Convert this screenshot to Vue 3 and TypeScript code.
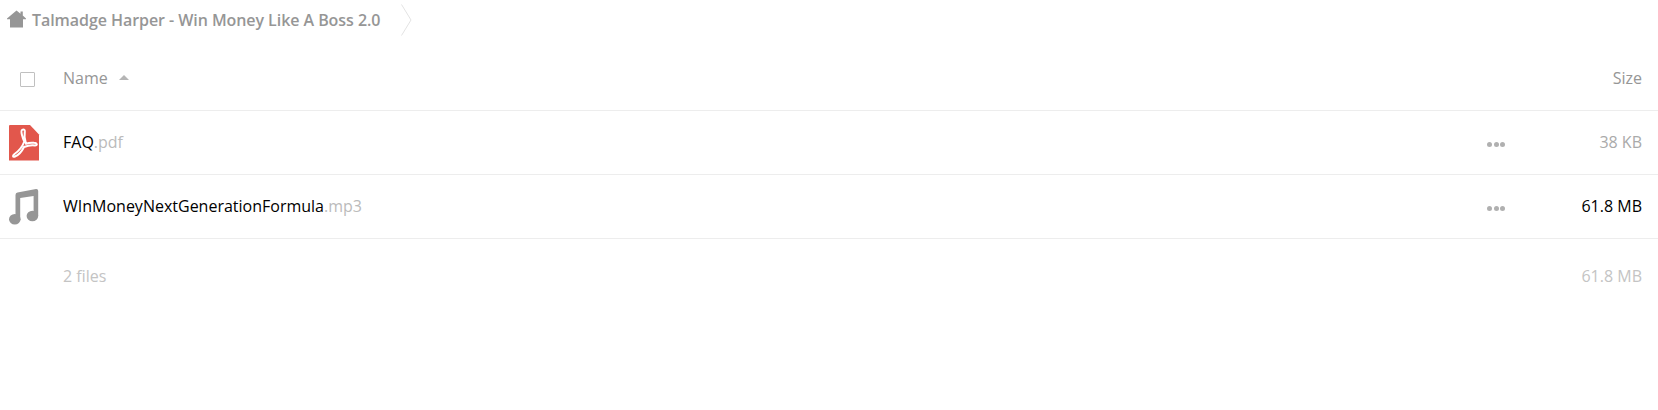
<script setup lang="ts">
interface FileRow { base: string; ext: string; size: string; dark: boolean; kind: 'pdf' | 'audio' }
const files: FileRow[] = [
  { base: 'FAQ', ext: '.pdf', size: '38 KB', dark: false, kind: 'pdf' },
  { base: 'WInMoneyNextGenerationFormula', ext: '.mp3', size: '61.8 MB', dark: true, kind: 'audio' },
]
</script>

<template>
  <div class="page">
    <nav class="crumbs">
      <svg class="home" width="19" height="18" viewBox="0 0 19 18">
        <path d="M9.5 0.5 L13.5 3.8 V1.5 H15.8 V5.6 L19 8.6 V9.2 H16 V17.5 H3 V9.2 H0 V8.6 Z" fill="#969696" />
      </svg>
      <span class="crumb">Talmadge Harper - Win Money Like A Boss 2.0</span>
      <svg class="chev" width="11" height="32" viewBox="0 0 11 32">
        <path d="M0.5 0.5 L10 16 L0.5 31.5" fill="none" stroke="#e3e3e3" />
      </svg>
    </nav>
    <div class="row head">
      <div class="icon-col"><span class="check"></span></div>
      <div class="name-col">Name<span class="sort"></span></div>
      <div class="size-col">Size</div>
    </div>
    <div v-for="f in files" :key="f.base" class="row file">
      <div class="icon-col">
        <svg v-if="f.kind === 'pdf'" class="ficon" width="31" height="36" viewBox="0 0 31 36">
          <path d="M0 1 Q0 0 1 0 H21 L30 9.5 V35.5 H0 Z" fill="#e2574c" />
          <path d="M13 5 C11.5 6 13.5 13 15.3 16.5 C13.5 21.5 10.5 25.5 5.5 29 C3 31 4 32.5 6 31.5 C10 30 13 26 15 22 C19 20.5 22.5 20 26 20.5 C29 20.5 28 18 25 17.8 C22 17.5 19 18 17 18.8 C15.5 14.5 15.3 9 15.8 6.2 C16 4.5 14.5 4 13 5 Z" fill="none" stroke="#fff" stroke-width="2" stroke-linejoin="round" />
        </svg>
        <svg v-else class="ficon" width="30" height="37" viewBox="0 0 30 37">
          <path d="M6.5 7 Q6.5 4.8 8.5 4.4 L27 1 Q29.2 0.8 29.2 3 V28 H24.6 V8 L11.2 10 V32 H6.5 Z" fill="#969696" />
          <ellipse cx="5.8" cy="31.3" rx="5.8" ry="5.3" fill="#969696" />
          <ellipse cx="23.4" cy="28" rx="5.8" ry="5.3" fill="#969696" />
        </svg>
      </div>
      <div class="name-col">
        <span class="base">{{ f.base }}</span><span class="ext">{{ f.ext }}</span>
      </div>
      <div class="dots"><i></i><i></i><i></i></div>
      <div class="size-col" :class="{ dark: f.dark }">{{ f.size }}</div>
    </div>
    <div class="row summary">
      <div class="icon-col"></div>
      <div class="name-col">2 files</div>
      <div class="size-col">61.8 MB</div>
    </div>
  </div>
</template>

<style>
html, body { background: #fff; }
</style>

<style scoped>
.page {
  width: 1658px;
  height: 410px;
  background: #fff;
  font-family: "Open Sans", sans-serif;
  font-size: 16px;
  overflow: hidden;
}
.crumbs {
  height: 44px;
  display: flex;
  align-items: flex-start;
  color: #969696;
}
.home { margin: 10px 0 0 7px; }
.crumb { margin: 8px 0 0 6px; font-weight: 600; line-height: 24px; letter-spacing: -0.06px; }
.chev { margin: 4px 0 0 21px; }
.row {
  display: flex;
  align-items: center;
  border-bottom: 1px solid #ededed;
}
.head { height: 65px; margin-top: 1px; color: #969696; }
.file { height: 61px; padding-bottom: 2px; }
.file .icon-col { margin-top: 2px; }
.icon-col {
  width: 63px;
  flex: none;
  display: flex;
  padding-left: 9px;
  box-sizing: border-box;
}
.head .icon-col { padding-left: 20px; }
.check {
  width: 15px;
  height: 15px;
  box-sizing: border-box;
  border: 1px solid #c0c0c0;
  border-radius: 1px;
  margin-top: 3px;
}
.name-col { flex: 1; min-width: 0; display: flex; align-items: center; }
.sort {
  width: 0;
  height: 0;
  margin: 0 0 0 11px;
  border-left: 5px solid transparent;
  border-right: 5px solid transparent;
  border-bottom: 5px solid #b5b5b5;
}
.base { color: #000; }
.ext { color: #bbb; }
.dots { display: flex; gap: 1.5px; margin: 5px 17px 0 0; width: 18px; }
.dots i { width: 5px; height: 5px; border-radius: 50%; background: #b0b0b0; flex: none; }
.size-col {
  width: 136px;
  flex: none;
  text-align: right;
  padding-right: 16px;
  box-sizing: border-box;
  color: #aaa;
}
.head .size-col { color: #969696; }
.size-col.dark { color: #000; }
.summary { height: 74px; border-bottom: 0; color: #c4c4c4; }
.summary .size-col { color: #c4c4c4; }
</style>
